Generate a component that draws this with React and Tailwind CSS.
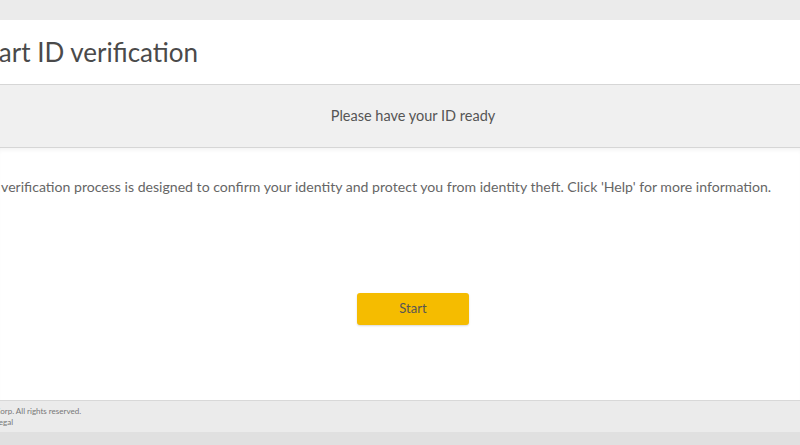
export default function App() {
  const font = { fontFamily: 'Lato, "Open Sans", sans-serif' };
  return (
    <div className="w-[800px] h-[445px] overflow-hidden bg-[#e9e9e9] flex flex-col" style={font}>
      <div className="h-[20px] bg-[#ebebeb] shrink-0" />
      <div className="bg-white h-[65px] shrink-0 border-b border-[#d6d6d6] flex items-center">
        <h1 className="ml-[-24px] text-[26px] leading-none text-[#4a4a4a] font-normal whitespace-nowrap">Start ID verification</h1>
      </div>
      <div className="bg-[#f0f0f0] h-[63px] shrink-0 border-b border-[#d6d6d6] flex items-center justify-center pl-[26px]">
        <p className="text-[14.5px] text-[#555] whitespace-nowrap">Please have your ID ready</p>
      </div>
      <div className="bg-white h-[252px] shrink-0 flex flex-col shadow-[inset_0_4px_4px_-2px_rgba(0,0,0,0.05)]">
        <p className="ml-[-46px] mt-[28px] text-[14.1px] text-[#666] whitespace-nowrap">This ID verification process is designed to confirm your identity and protect you from identity theft. Click 'Help' for more information.</p>
        <div className="flex justify-center pl-[26px] mt-[96px]">
          <button className="w-[112px] h-[32px] rounded-[3px] bg-[#f5bc00] text-[13px] text-[#555] shadow-[0_1px_2px_rgba(0,0,0,0.15)]">Start</button>
        </div>
      </div>
      <div className="bg-[#ebebeb] h-[32px] shrink-0 border-t border-[#d8d8d8] flex flex-col justify-center">
        <p className="ml-[-5px] text-[8px] leading-[11px] text-[#777] whitespace-nowrap">Corp. All rights reserved.</p>
        <p className="ml-[-5px] text-[8px] leading-[11px] text-[#777] whitespace-nowrap">Legal</p>
      </div>
      <div className="flex-1 bg-[#e0e0e0]" />
    </div>
  );
}
